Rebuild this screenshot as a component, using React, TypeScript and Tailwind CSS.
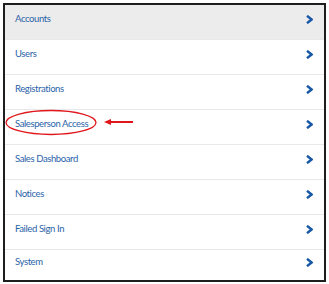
import React from "react";

const items = [
  "Accounts",
  "Users",
  "Registrations",
  "Salesperson Access",
  "Sales Dashboard",
  "Notices",
  "Failed Sign In",
  "System",
];

function Chevron() {
  return (
    <svg width="7" height="9" viewBox="0 0 7 9" className="shrink-0">
      <path d="M1 0.8 L5.6 4.5 L1 8.2" fill="none" stroke="#1757a6" strokeWidth="2.4" strokeLinejoin="miter" />
    </svg>
  );
}

export default function App() {
  return (
    <div className="w-[329px] h-[284px] bg-white pt-[3px] pl-[3px]" style={{ fontFamily: "Lato, 'Open Sans', sans-serif" }}>
      <div className="w-[323px] h-[279px] border-2 border-[#1e1e1e] flex flex-col relative">
        {items.map((t, i) => (
          <div
            key={t}
            className={`flex items-center justify-between pl-[10px] pr-[11px] pb-[5px] ${i === 0 ? "bg-[#ececec]" : "bg-white"} ${i < items.length - 1 ? "h-[35px] border-b border-[#e8e8e8]" : "flex-1"}`}
          >
            <span className="text-[9.5px] text-[#2a63a8] tracking-[-0.4px]">{t}</span>
            <Chevron />
          </div>
        ))}
        <svg className="absolute left-0 top-[103px]" width="140" height="32" viewBox="0 0 140 32">
          <ellipse cx="46" cy="14.5" rx="45" ry="12" fill="none" stroke="#e0161b" strokeWidth="1.3" />
          <line x1="104" y1="14" x2="128" y2="14" stroke="#e0161b" strokeWidth="2" />
          <path d="M99 14 L106 11 L106 17 Z" fill="#e0161b" />
        </svg>
      </div>
    </div>
  );
}
